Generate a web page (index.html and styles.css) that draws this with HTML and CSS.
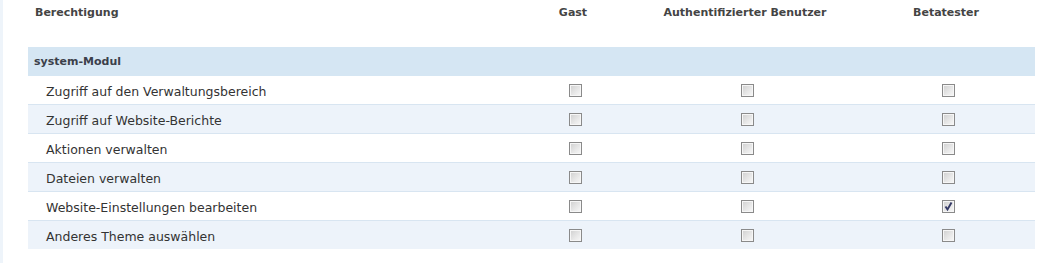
FILE: index.html
```html
<!DOCTYPE html>
<html lang="de">
<head>
<meta charset="utf-8">
<title>Berechtigungen</title>
<link rel="stylesheet" href="styles.css">
</head>
<body>
<div class="page">
  <div class="perm-table">
    <div class="row head">
      <div class="cell name">Berechtigung</div>
      <div class="cell c">Gast</div>
      <div class="cell c">Authentifizierter Benutzer</div>
      <div class="cell c">Betatester</div>
    </div>
    <div class="row module">
      <div class="cell name">system-Modul</div>
      <div class="cell"></div>
      <div class="cell"></div>
      <div class="cell"></div>
    </div>
    <div class="row item">
      <div class="cell name">Zugriff auf den Verwaltungsbereich</div>
      <div class="cell c"><span class="cb"></span></div>
      <div class="cell c"><span class="cb"></span></div>
      <div class="cell c"><span class="cb"></span></div>
    </div>
    <div class="row item alt">
      <div class="cell name">Zugriff auf Website-Berichte</div>
      <div class="cell c"><span class="cb"></span></div>
      <div class="cell c"><span class="cb"></span></div>
      <div class="cell c"><span class="cb"></span></div>
    </div>
    <div class="row item">
      <div class="cell name">Aktionen verwalten</div>
      <div class="cell c"><span class="cb"></span></div>
      <div class="cell c"><span class="cb"></span></div>
      <div class="cell c"><span class="cb"></span></div>
    </div>
    <div class="row item alt">
      <div class="cell name">Dateien verwalten</div>
      <div class="cell c"><span class="cb"></span></div>
      <div class="cell c"><span class="cb"></span></div>
      <div class="cell c"><span class="cb"></span></div>
    </div>
    <div class="row item">
      <div class="cell name">Website-Einstellungen bearbeiten</div>
      <div class="cell c"><span class="cb"></span></div>
      <div class="cell c"><span class="cb"></span></div>
      <div class="cell c"><span class="cb checked"><svg viewBox="0 0 11 11" width="11" height="11"><path d="M2.5 5.5 L4.5 8.5 L8.5 1.5" fill="none" stroke="#353a66" stroke-width="1.9"/></svg></span></div>
    </div>
    <div class="row item alt last">
      <div class="cell name">Anderes Theme auswählen</div>
      <div class="cell c"><span class="cb"></span></div>
      <div class="cell c"><span class="cb"></span></div>
      <div class="cell c"><span class="cb"></span></div>
    </div>
  </div>
</div>
</body>
</html>
```

FILE: styles.css
```css
html, body {
  margin: 0;
  padding: 0;
  background: #ffffff;
}
body {
  font-family: "DejaVu Sans", Verdana, sans-serif;
  font-size: 12.5px;
  color: #333333;
  height: 263px;
  overflow: hidden;
}
.page {
  border-left: 3px solid #eef4fa;
  padding-left: 25px;
  height: 263px;
  box-sizing: border-box;
}
.perm-table {
  width: 1007px;
  display: flex;
  flex-direction: column;
}
.row {
  display: grid;
  grid-template-columns: 485px 120px 224px 178px;
  align-items: center;
}
.head {
  height: 25px;
  margin-bottom: 22px;
  font-weight: bold;
  color: #444444;
  font-size: 11px;
}
.head .name {
  padding-left: 7px;
}
.module {
  height: 29px;
  background: #d5e6f3;
  font-weight: bold;
  color: #3b3f4a;
  font-size: 11px;
}
.module .name {
  padding-left: 6px;
}
.item {
  height: 28px;
  border-bottom: 1px solid #d8e5f1;
  background: #ffffff;
}
.item.alt {
  background: #edf3fa;
}
.item.last {
  border-bottom: none;
}
.item .name {
  padding-left: 18px;
  padding-top: 2px;
}
.cell.c {
  display: flex;
  justify-content: center;
}
.cb {
  display: block;
  width: 11px;
  height: 11px;
  border: 1px solid #8a8a8a;
  background: linear-gradient(135deg, #cfcfcf 0%, #e9e9e9 60%, #f8f8f8 100%);
  box-shadow: inset 0 0 0 1px #f6f6f6;
  margin-left: 4px;
  position: relative;
}
.cb svg {
  position: absolute;
  left: 0;
  top: 0;
}
```
